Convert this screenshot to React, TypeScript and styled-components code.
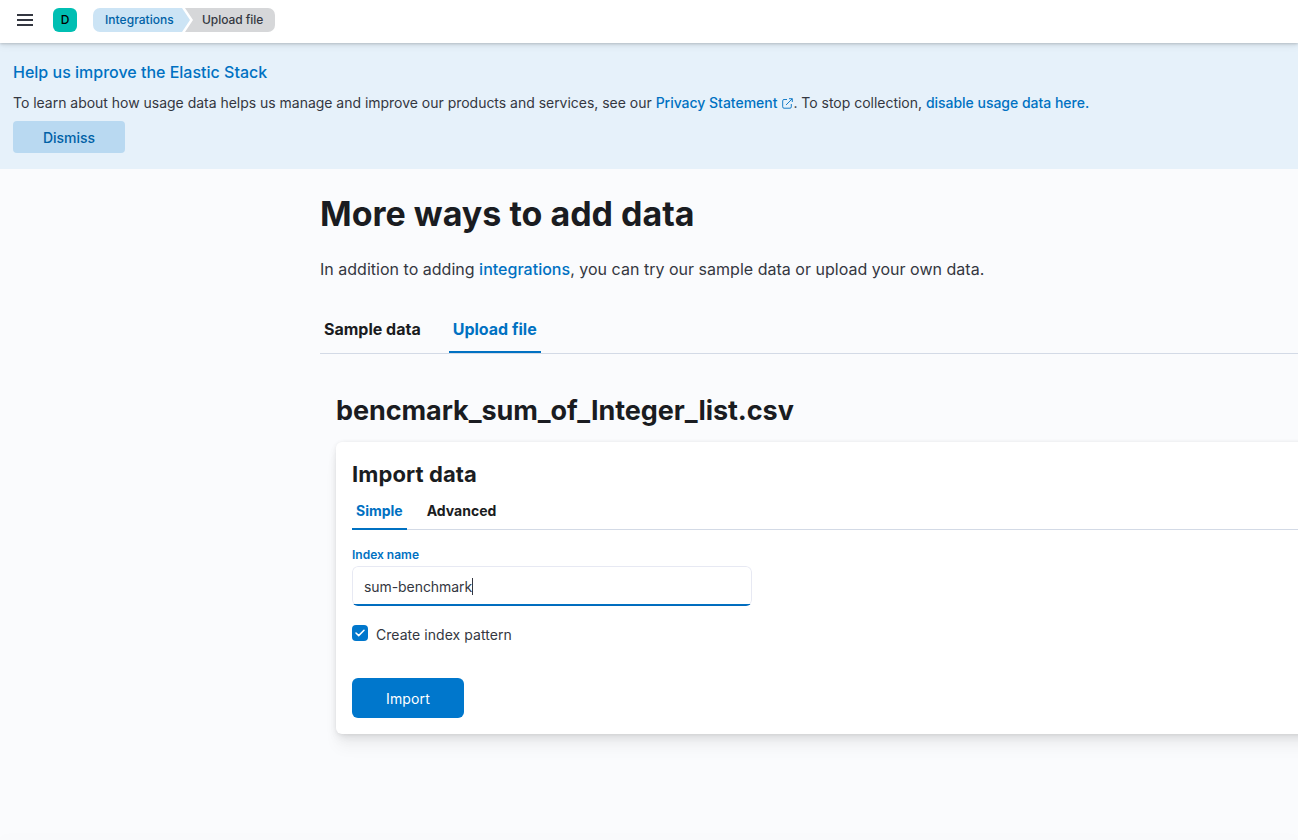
import React from 'react';
import styled, { createGlobalStyle } from 'styled-components';

const GlobalStyle = createGlobalStyle`
  * { box-sizing: border-box; }
  html, body { margin: 0; height: 100%; overflow: hidden; }
  body {
    background: #fafbfd;
    color: #343741;
    font-family: Inter, "Liberation Sans", sans-serif;
    font-size: 14px;
    line-height: 20px;
  }
  h1, h2, h3, p { margin: 0; }
  button { font-family: inherit; border: 0; cursor: pointer; }
`;

const Page = styled.div`
  width: 100%;
  height: 840px;
  display: flex;
  flex-direction: column;
  overflow: hidden;
`;

const Header = styled.header`
  flex: none;
  display: flex;
  align-items: flex-start;
  height: 43px;
  padding: 8px 0 0 13px;
  background: #fff;
  z-index: 1;
  box-shadow: 0 1px 2px rgba(0, 0, 0, 0.12), 0 2px 4px rgba(0, 0, 0, 0.07), 0 4px 8px rgba(0, 0, 0, 0.04);
`;

const MenuButton = styled.button`
  display: flex;
  align-items: center;
  justify-content: center;
  width: 24px;
  height: 24px;
  padding: 0;
  background: none;
`;

const SpaceAvatar = styled.div`
  width: 24px;
  height: 24px;
  margin-left: 16px;
  border-radius: 6px;
  background: #00bfb3;
  color: #000;
  font-size: 12px;
  font-weight: 500;
  line-height: 24px;
  text-align: center;
`;

const Breadcrumbs = styled.nav`
  display: flex;
  margin-left: 16px;
`;

const Crumb = styled.span<{ $current?: boolean }>`
  height: 24px;
  font-size: 12px;
  font-weight: 500;
  line-height: 24px;
  white-space: nowrap;
  color: ${(p) => (p.$current ? '#343741' : '#0061a6')};
  background: ${(p) => (p.$current ? '#d6d7d9' : '#cce4f5')};
  width: ${(p) => (p.$current ? '90px' : '97px')};
  margin-left: ${(p) => (p.$current ? '-5px' : '0')};
  padding-left: ${(p) => (p.$current ? '17px' : '12px')};
  letter-spacing: ${(p) => (p.$current ? '-0.06px' : '0.04px')};
  border-radius: ${(p) => (p.$current ? '0 7px 7px 0' : '7px 0 0 7px')};
  clip-path: ${(p) =>
    p.$current
      ? 'polygon(0 0, 100% 0, 100% 100%, 0 100%, 8px 50%)'
      : 'polygon(0 0, calc(100% - 8px) 0, 100% 50%, calc(100% - 8px) 100%, 0 100%)'};
`;

const Notice = styled.section`
  flex: none;
  height: 126px;
  padding: 17px 13px 0;
  background: #e6f1fa;
`;

const NoticeTitle = styled.h3`
  color: #0071c2;
  font-size: 16px;
  font-weight: 500;
  line-height: 24px;
`;

const NoticeText = styled.p`
  margin-top: 9px;
  line-height: 20px;
  letter-spacing: -0.021px;
  white-space: nowrap;
`;

const Link = styled.a`
  color: #0071c2;
  font-weight: 500;
  svg { margin-left: 5px; vertical-align: -1px; }
`;

const Button = styled.button<{ $primary?: boolean }>`
  display: block;
  width: 112px;
  height: ${(p) => (p.$primary ? '40px' : '32px')};
  padding: 0;
  border-radius: ${(p) => (p.$primary ? '6px' : '4px')};
  background: ${(p) => (p.$primary ? '#0077cc' : '#b9d9f1')};
  color: ${(p) => (p.$primary ? '#fff' : '#0061a6')};
  font-size: 14px;
  font-weight: ${(p) => (p.$primary ? 400 : 500)};
  letter-spacing: ${(p) => (p.$primary ? '0.12px' : '0')};
`;

const DismissButton = styled(Button)`
  margin-top: 8px;
`;

const Main = styled.main`
  flex: 1;
  min-height: 0;
  padding: 25px 0 0 320px;
  overflow: hidden;
`;

const PageTitle = styled.h1`
  color: #1a1c21;
  font-size: 34px;
  font-weight: 700;
  line-height: 40px;
`;

const Intro = styled.p`
  margin-top: 23px;
  font-size: 16px;
  line-height: 24px;
  letter-spacing: 0.016px;
`;

const Tabs = styled.div<{ $small?: boolean }>`
  display: flex;
  gap: ${(p) => (p.$small ? '16px' : '24px')};
  height: ${(p) => (p.$small ? '40px' : '49px')};
  margin-top: ${(p) => (p.$small ? '0' : '24px')};
  border-bottom: 1px solid #d3dae6;
`;

const Tab = styled.button<{ $active?: boolean; $small?: boolean }>`
  height: ${(p) => (p.$small ? '40px' : '48px')};
  padding: ${(p) => (p.$small ? '1px 4px 0' : '0 4px')};
  background: none;
  color: ${(p) => (p.$active ? '#0071c2' : '#1a1c21')};
  font-size: ${(p) => (p.$small ? '14px' : '16px')};
  font-weight: 700;
  line-height: ${(p) => (p.$small ? '40px' : '48px')};
  box-shadow: ${(p) => (p.$active ? 'inset 0 -2px 0 #0071c2' : 'none')};
`;

const FileSection = styled.section`
  padding: 41px 0 0 16px;
`;

const FileTitle = styled.h1`
  color: #1a1c21;
  font-size: 27px;
  font-weight: 700;
  line-height: 32px;
  letter-spacing: -0.07px;
`;

const Panel = styled.div`
  height: 292px;
  margin: 15px -40px 0 0;
  padding: 16px 56px 16px 16px;
  border-radius: 6px;
  background: #fff;
  box-shadow: 0 0.9px 4px -1px rgba(0, 0, 0, 0.08), 0 2.6px 8px -1px rgba(0, 0, 0, 0.06),
    0 5.7px 12px -1px rgba(0, 0, 0, 0.05), 0 15px 15px -1px rgba(0, 0, 0, 0.04);
`;

const PanelTitle = styled.h2`
  color: #1a1c21;
  font-size: 22px;
  font-weight: 700;
  line-height: 32px;
  letter-spacing: 0.1px;
`;

const PanelTabs = styled(Tabs)`
  margin-right: -56px;
`;

const FieldLabel = styled.label`
  display: block;
  margin-top: 16px;
  color: #0071c2;
  font-size: 12px;
  font-weight: 600;
  line-height: 18px;
`;

const TextField = styled.div`
  display: flex;
  align-items: center;
  width: 400px;
  height: 40px;
  margin-top: 2px;
  padding: 1px 12px 0;
  border-radius: 6px;
  background: linear-gradient(to top, #0071c2 2px, transparent 2px), #fff;
  box-shadow: inset 0 0 0 1px rgba(17, 43, 134, 0.1);
  letter-spacing: -0.07px;
`;

const Caret = styled.span`
  width: 1px;
  height: 17px;
  background: #343741;
`;

const CheckRow = styled.label`
  display: flex;
  align-items: flex-start;
  gap: 8px;
  margin-top: 19px;
  letter-spacing: 0.05px;
`;

const CheckBox = styled.span`
  display: flex;
  align-items: center;
  justify-content: center;
  width: 16px;
  height: 16px;
  border-radius: 4px;
  background: #0077cc;
`;

const ImportButton = styled(Button)`
  margin-top: 33px;
`;

const BottomBar = styled.div`
  flex: none;
  height: 0;
  box-shadow: 0 0 12px 1px rgba(0, 0, 0, 0.05);
`;

export default function App() {
  return (
    <Page>
      <GlobalStyle />
      <Header>
        <MenuButton aria-label="Menu">
          <svg width="16" height="12" viewBox="0 0 16 12" fill="#343741" shapeRendering="crispEdges">
            <path d="M0 0h16v2H0zM0 5h16v2H0zM0 10h16v2H0z" />
          </svg>
        </MenuButton>
        <SpaceAvatar>D</SpaceAvatar>
        <Breadcrumbs>
          <Crumb>Integrations</Crumb>
          <Crumb $current>Upload file</Crumb>
        </Breadcrumbs>
      </Header>
      <Notice>
        <NoticeTitle>Help us improve the Elastic Stack</NoticeTitle>
        <NoticeText>
          To learn about how usage data helps us manage and improve our products and services, see our{' '}
          <Link>
            Privacy Statement
            <svg width="11" height="11" viewBox="0 0 11 11" fill="none" stroke="#0071c2" strokeWidth="0.9">
              <path d="M5 1.5H2A1.3 1.3 0 0 0 .7 2.800v6A1.300 1.300 0 0 0 2 10.200h6a1.300 1.300 0 0 0 1.300-1.300V6M7 .7h3.300V4M10.200.8L4 7" />
            </svg>
          </Link>
          . To stop collection, <Link>disable usage data here.</Link>
        </NoticeText>
        <DismissButton>Dismiss</DismissButton>
      </Notice>
      <Main>
        <PageTitle>More ways to add data</PageTitle>
        <Intro>
          In addition to adding <Link>integrations</Link>, you can try our sample data or upload your own data.
        </Intro>
        <Tabs>
          <Tab>Sample data</Tab>
          <Tab $active>Upload file</Tab>
        </Tabs>
        <FileSection>
          <FileTitle>bencmark_sum_of_Integer_list.csv</FileTitle>
          <Panel>
            <PanelTitle>Import data</PanelTitle>
            <PanelTabs $small>
              <Tab $small $active>Simple</Tab>
              <Tab $small>Advanced</Tab>
            </PanelTabs>
            <FieldLabel>Index name</FieldLabel>
            <TextField>
              sum-benchmark
              <Caret />
            </TextField>
            <CheckRow>
              <CheckBox>
                <svg width="10" height="8" viewBox="0 0 10 8" fill="none" stroke="#fff" strokeWidth="1.5" strokeLinecap="round" strokeLinejoin="round">
                  <path d="M1 4l2.700 2.600L9 1.200" />
                </svg>
              </CheckBox>
              Create index pattern
            </CheckRow>
            <ImportButton $primary>Import</ImportButton>
          </Panel>
        </FileSection>
      </Main>
      <BottomBar />
    </Page>
  );
}
